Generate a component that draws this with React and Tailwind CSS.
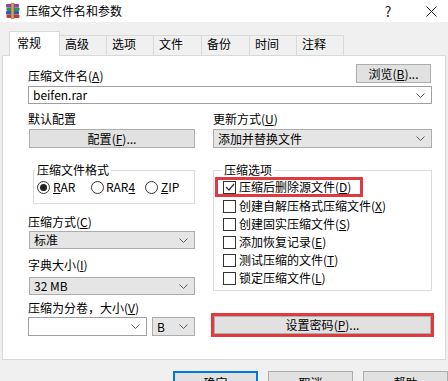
import React from "react";

function Chevron() {
  return (
    <svg width="9" height="5" viewBox="0 0 9 5" className="shrink-0">
      <path d="M0.5 0.5L4.5 4.5L8.5 0.5" fill="none" stroke="#5a5a5a" strokeWidth="1" />
    </svg>
  );
}

// label with an underlined access key, e.g. 压缩文件名(A)
function Key({ t, k, tail = "" }) {
  return (
    <>
      {t}(<span className="underline">{k}</span>){tail}
    </>
  );
}

function Combo({ value, white, className = "" }) {
  return (
    <div
      className={`flex items-center justify-between h-[18px] pl-[4px] pr-[6px] border ${
        white ? "bg-white border-[#a0a0a0]" : "bg-[#e5e5e5] border-[#acacac]"
      } ${className}`}
    >
      <span>{value}</span>
      <Chevron />
    </div>
  );
}

function Check({ on }) {
  return (
    <span className="w-[13px] h-[13px] border border-[#333] bg-white flex items-center justify-center shrink-0">
      {on && (
        <svg width="10" height="8" viewBox="0 0 10 8">
          <path d="M1 4L4 7L9 1" fill="none" stroke="#333" strokeWidth="1.2" />
        </svg>
      )}
    </span>
  );
}

function Radio({ on }) {
  return (
    <span className="w-[13px] h-[13px] rounded-full border border-[#333] bg-white flex items-center justify-center shrink-0">
      {on && <span className="w-[7px] h-[7px] rounded-full bg-[#222]" />}
    </span>
  );
}

function RarIcon() {
  return (
    <svg width="16" height="16" viewBox="0 0 16 16">
      <rect x="1" y="1" width="13" height="3.5" rx="1" fill="#9b3fa0" />
      <rect x="1.5" y="4.5" width="13" height="3.5" rx="1" fill="#2f8f5b" />
      <rect x="1" y="8" width="13" height="3.5" rx="1" fill="#2d5cb8" />
      <rect x="1.5" y="11.5" width="13" height="3.5" rx="1" fill="#c23a3a" />
      <rect x="6" y="0.5" width="3" height="15" fill="#c9a46a" />
      <rect x="6" y="0.5" width="3" height="15" fill="none" stroke="#7a5a2a" strokeWidth="0.5" />
    </svg>
  );
}

const tabs = [
  ["高级", "w-[47px]"],
  ["选项", "w-[47px]"],
  ["文件", "w-[48px]"],
  ["备份", "w-[48px]"],
  ["时间", "w-[47px]"],
  ["注释", "w-[47px]"],
];

const options = [
  ["创建自解压格式压缩文件", "X"],
  ["创建固实压缩文件", "S"],
  ["添加恢复记录", "E"],
  ["测试压缩的文件", "T"],
  ["锁定压缩文件", "L"],
];

export default function App() {
  return (
    <div className="w-[448px] h-[381px] overflow-hidden bg-[#f0f0f0] text-black text-[12px] leading-[14px] font-['Noto_Sans_CJK_SC',sans-serif]">
      {/* title bar */}
      <div className="h-[22px] bg-white flex items-center">
        <div className="ml-[5px]">
          <RarIcon />
        </div>
        <div className="ml-[5px]">压缩文件名和参数</div>
        <div className="ml-auto flex items-center shrink-0">
          <div className="w-[46px] pr-[8px] text-center text-[14px] text-[#222]">?</div>
          <div className="w-[33px] flex justify-center">
            <svg width="11" height="11" viewBox="0 0 11 11">
              <path d="M0.5 0.5L10.5 10.5M10.5 0.5L0.5 10.5" stroke="#222" strokeWidth="1" />
            </svg>
          </div>
        </div>
      </div>

      {/* tabs */}
      <div className="relative z-10 flex items-end pl-[9px] pt-[9px]">
        <div className="w-[51px] h-[25px] bg-white border-l border-t border-r border-[#d9d9d9] pl-[7px] pt-[4px]">常规</div>
        {tabs.map(([t, w]) => (
          <div key={t} className={`${w} h-[20px] mb-[1px] border-t border-r border-[#d9d9d9] pl-[5px] pt-[1px]`}>
            {t}
          </div>
        ))}
      </div>

      {/* panel */}
      <div className="-mt-px ml-[2px] w-[444px] h-[305px] bg-white border border-[#d9d9d9] pl-[25px] pr-[13px]">
        <div className="mt-[8px] flex items-end justify-between">
          <div>
            <Key t="压缩文件名" k="A" />
          </div>
          <button className="w-[75px] h-[19px] bg-[#e1e1e1] border border-[#adadad] mr-px">
            <Key t="浏览" k="B" tail="..." />
          </button>
        </div>
        <Combo value="beifen.rar" white className="mt-[3px]" />

        <div className="grid grid-cols-[167px_219px] gap-x-[18px]">
          {/* left column */}
          <div className="flex flex-col">
            <div className="mt-[8px]">默认配置</div>
            <button className="mt-[3px] h-[19px] ml-px bg-[#e1e1e1] border border-[#adadad]">
              <Key t="配置" k="F" tail="..." />
            </button>

            <fieldset className="mt-[15px] ml-[5px] border border-[#dcdcdc] pb-[9px]">
              <legend className="ml-[1px] px-[2px]">压缩文件格式</legend>
              <div className="flex items-center pt-[3px] pl-[3px]">
                <div className="w-[54px] flex items-center gap-[3px]">
                  <Radio on />
                  <span>
                    <span className="underline">R</span>AR
                  </span>
                </div>
                <div className="w-[54px] flex items-center gap-[2px]">
                  <Radio />
                  <span>
                    RAR<span className="underline">4</span>
                  </span>
                </div>
                <div className="flex items-center gap-[3px]">
                  <Radio />
                  <span>
                    <span className="underline">Z</span>IP
                  </span>
                </div>
              </div>
            </fieldset>

            <div className="mt-[11px]">
              <Key t="压缩方式" k="C" />
            </div>
            <Combo value="标准" className="mt-[2px] ml-px" />

            <div className="mt-[9px]">
              <Key t="字典大小" k="I" />
            </div>
            <Combo value="32 MB" className="mt-[5px] ml-px" />

            <div className="mt-[6px]">
              <Key t="压缩为分卷，大小" k="V" />
            </div>
            <div className="mt-[2px] flex gap-[5px]">
              <Combo value="" white className="w-[119px] h-[19px]" />
              <Combo value="B" className="flex-1 h-[19px]" />
            </div>
          </div>

          {/* right column */}
          <div className="flex flex-col">
            <div className="mt-[8px]">
              <Key t="更新方式" k="U" />
            </div>
            <Combo value="添加并替换文件" className="mt-[3px] h-[19px]" />

            <fieldset className="mt-[15px] border border-[#dcdcdc] pb-[3px]">
              <legend className="ml-[8px] px-[2px]">压缩选项</legend>
              <div className="ml-px w-[148px] h-[20px] border-[3px] border-[#e0393e] flex items-center gap-[3px] pl-[5px]">
                <Check on />
                <span className="whitespace-nowrap">
                  <Key t="压缩后删除源文件" k="D" />
                </span>
              </div>
              {options.map(([t, k]) => (
                <div key={k} className="h-[18px] flex items-center gap-[3px] pl-[9px]">
                  <Check />
                  <span className="whitespace-nowrap">
                    <Key t={t} k={k} />
                  </span>
                </div>
              ))}
            </fieldset>

            <div className="mt-[22px] -mx-[2px] border-[3px] border-[#e0393e]">
              <button className="w-full h-[18px] bg-[#e1e1e1] border border-[#adadad]">
                <Key t="设置密码" k="P" tail="..." />
              </button>
            </div>
          </div>
        </div>
      </div>

      {/* dialog buttons */}
      <div className="mt-[11px] flex justify-end gap-[10px]">
        <button className="w-[85px] h-[23px] bg-[#e1e1e1] border-2 border-[#0078d7]">确定</button>
        <button className="w-[85px] h-[23px] bg-[#e1e1e1] border border-[#adadad]">取消</button>
        <button className="w-[85px] h-[23px] bg-[#e1e1e1] border border-[#adadad]">帮助</button>
      </div>
    </div>
  );
}
